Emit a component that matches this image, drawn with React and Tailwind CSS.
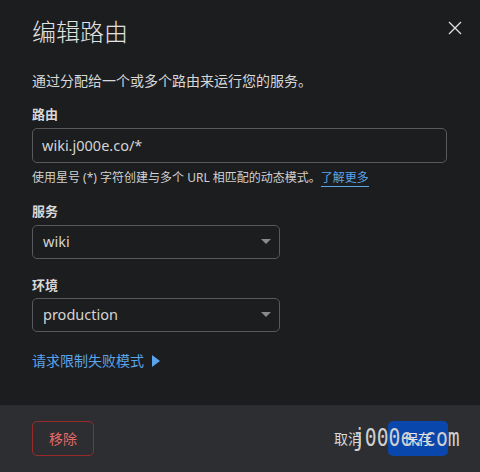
export default function App() {
  const font = { fontFamily: '"Noto Sans", "Noto Sans CJK SC", sans-serif' };
  return (
    <div className="relative w-[480px] h-[472px] bg-[#1c1d1f] text-[#dcdcdc] flex flex-col overflow-hidden" style={font}>
      <div className="flex-1 px-8 pt-[14px]">
        <div className="flex items-start justify-between">
          <h1 className="text-[24px] leading-[36px] font-light text-[#e2e2e2]">编辑路由</h1>
          <button className="mt-[4px] mr-[-17px] w-[20px] h-[20px] flex items-center justify-center text-[#e0e0e0]">
            <svg width="14" height="14" viewBox="0 0 14 14" fill="none" stroke="currentColor" strokeWidth="1.3">
              <path d="M1 1 L13 13 M13 1 L1 13" />
            </svg>
          </button>
        </div>
        <p className="mt-[20px] text-[14px] leading-[22px] text-[#d8d8d8]">通过分配给一个或多个路由来运行您的服务。</p>

        <div className="mt-[13px] text-[13px] leading-[18px] font-bold text-[#d8d8d8]">路由</div>
        <div className="mt-[5px] w-[415px] h-[35px] rounded-[5px] border border-[#58595c] flex items-center px-[9px] text-[14.5px] text-[#d4d4d4]">wiki.j000e.co/*</div>
        <p className="mt-[5px] text-[12px] leading-[20px] text-[#d0d0d0]">
          使用星号 (*) 字符创建与多个 URL 相匹配的动态模式。<span className="text-[#5aa4ea] border-b border-[#5aa4ea]">了解更多</span>
        </p>

        <div className="mt-[14px] text-[13px] leading-[18px] font-bold text-[#d8d8d8]">服务</div>
        <div className="mt-[5px] w-[248px] h-[34px] rounded-[5px] border border-[#58595c] flex items-center justify-between pl-[10px] pr-[8px] text-[14.5px] text-[#d4d4d4]">
          <span>wiki</span>
          <svg width="10" height="6" viewBox="0 0 10 6"><path d="M0 0 L10 0 L5 5 Z" fill="#8a8a8a" /></svg>
        </div>

        <div className="mt-[17px] text-[13px] leading-[18px] font-bold text-[#d8d8d8]">环境</div>
        <div className="mt-[4px] w-[248px] h-[34px] rounded-[5px] border border-[#58595c] flex items-center justify-between pl-[10px] pr-[8px] text-[14.5px] text-[#d4d4d4]">
          <span>production</span>
          <svg width="10" height="6" viewBox="0 0 10 6"><path d="M0 0 L10 0 L5 5 Z" fill="#8a8a8a" /></svg>
        </div>

        <div className="mt-[18px] flex items-center gap-[8px] text-[14px] leading-[22px] text-[#5aa4ea]">
          <span>请求限制失败模式</span>
          <svg width="8" height="12" viewBox="0 0 8 12"><path d="M0 0 L8 6 L0 12 Z" fill="#5aa4ea" /></svg>
        </div>
      </div>

      <div className="h-[67px] bg-[#2c2e31] flex items-center justify-between px-8">
        <button className="w-[62px] h-[35px] rounded-[5px] border border-[#9a2a2a] text-[14px] text-[#e46a6a]">移除</button>
        <div className="flex items-center gap-[26px]">
          <span className="text-[14px] text-[#d8d8d8]">取消</span>
          <button className="w-[60px] h-[35px] rounded-[5px] bg-[#0a47ad] text-[14px] text-[#e8e8e8]">保存</button>
        </div>
      </div>

      <div className="absolute left-[353px] top-[422px] text-[24px] leading-[32px] text-[#cfcfcf] origin-left scale-x-[0.82]" style={{ fontFamily: '"DejaVu Sans Mono", monospace' }}>j000e.com</div>
    </div>
  );
}
